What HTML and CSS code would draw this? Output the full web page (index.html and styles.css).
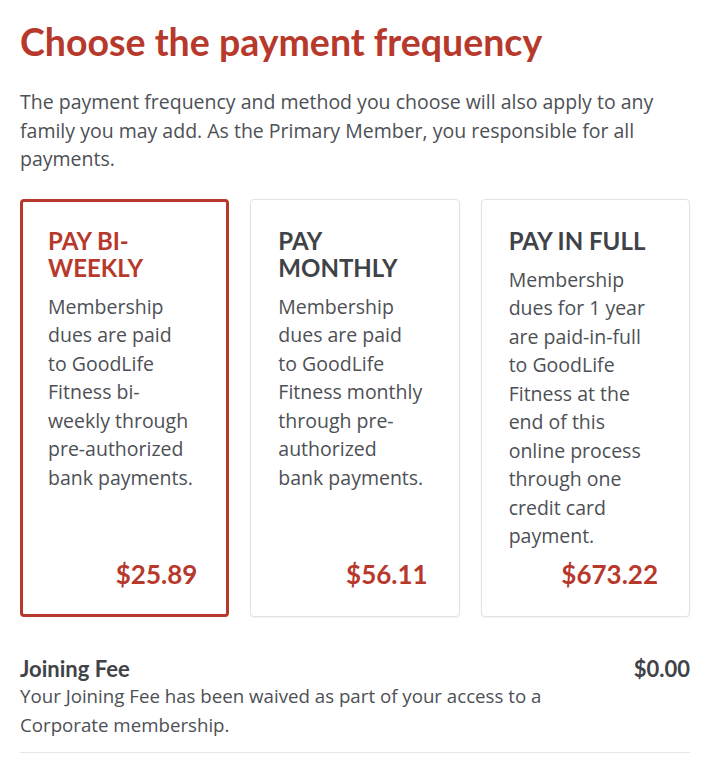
FILE: index.html
```html
<!DOCTYPE html>
<html lang="en">
<head>
<meta charset="utf-8">
<title>Choose the payment frequency</title>
<link rel="stylesheet" href="styles.css">
</head>
<body>
<main class="page">
  <h1 class="title">Choose the payment frequency</h1>
  <p class="intro">The payment frequency and method you choose will also apply to any family you may add. As the Primary Member, you responsible for all payments.</p>

  <div class="plans">
    <div class="plan plan--selected">
      <h2 class="plan-name">Pay bi-weekly</h2>
      <p class="plan-desc">Membership dues are paid to GoodLife Fitness bi-weekly through pre-authorized bank payments.</p>
      <div class="plan-price">$25.89</div>
    </div>
    <div class="plan">
      <h2 class="plan-name">Pay monthly</h2>
      <p class="plan-desc">Membership dues are paid to GoodLife Fitness monthly through pre-authorized bank payments.</p>
      <div class="plan-price">$56.11</div>
    </div>
    <div class="plan">
      <h2 class="plan-name">Pay in full</h2>
      <p class="plan-desc">Membership dues for 1 year are paid-in-full to GoodLife Fitness at the end of this online process through one credit card payment.</p>
      <div class="plan-price">$673.22</div>
    </div>
  </div>

  <section class="fee">
    <div class="fee-row">
      <span class="fee-name">Joining Fee</span>
      <span class="fee-amount">$0.00</span>
    </div>
    <p class="fee-desc">Your Joining Fee has been waived as part of your access to a Corporate membership.</p>
  </section>
</main>
</body>
</html>
```

FILE: styles.css
```css
* { box-sizing: border-box; }

html, body {
  margin: 0;
  padding: 0;
  background: #ffffff;
}

body {
  font-family: "Open Sans", Lato, Arial, sans-serif;
  color: #4d5055;
}

.page {
  padding: 20px 27px 0 20px;
}

.title {
  margin: 0;
  font-family: Lato, "Open Sans", Arial, sans-serif;
  font-size: 37.5px;
  line-height: 43px;
  font-weight: 700;
  color: #b7392c;
}

.intro {
  margin: 25px 0 0;
  font-size: 19.5px;
  line-height: 28.5px;
  color: #4d5055;
}

.plans {
  margin-top: 25px;
  display: grid;
  grid-template-columns: repeat(3, 1fr);
  column-gap: 21px;
}

.plan {
  display: flex;
  flex-direction: column;
  border: 1px solid #e2e2e2;
  border-radius: 4px;
  padding: 27px 34px 27px 27px;
  background: #fff;
  box-shadow: 0 1px 2px rgba(0,0,0,0.05);
}

.plan--selected {
  border: 3px solid #b7392c;
  padding: 25px 32px 25px 25px;
  box-shadow: none;
}

.plan-name {
  margin: 0;
  font-family: Lato, "Open Sans", Arial, sans-serif;
  font-size: 24px;
  line-height: 27px;
  font-weight: 700;
  text-transform: uppercase;
  color: #3f4247;
}

.plan--selected .plan-name {
  color: #b7392c;
}

.plan-desc {
  margin: 12px 0 0;
  font-size: 19.5px;
  line-height: 28.5px;
  color: #4d5055;
}

.plan-price {
  margin-top: auto;
  margin-right: -3px;
  padding-top: 8px;
  text-align: right;
  font-family: Lato, "Open Sans", Arial, sans-serif;
  font-size: 26px;
  line-height: 30px;
  font-weight: 700;
  color: #b7392c;
}

.fee {
  margin-top: 38px;
  padding-bottom: 13px;
  border-bottom: 1px solid #e6e6e6;
}

.fee-row {
  display: flex;
  justify-content: space-between;
  align-items: baseline;
}

.fee-name,
.fee-amount {
  font-family: Lato, "Open Sans", Arial, sans-serif;
  font-size: 22px;
  line-height: 28px;
  font-weight: 700;
  color: #3f4247;
}

.fee-desc {
  max-width: 560px;
  margin: -2px 0 0;
  font-size: 18.7px;
  line-height: 29px;
  color: #4d5055;
}
```
